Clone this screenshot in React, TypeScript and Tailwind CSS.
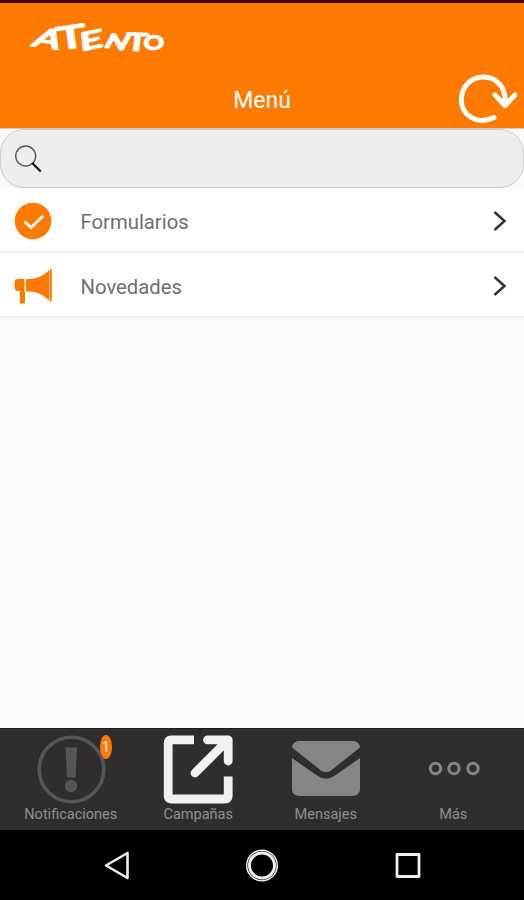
import type { ReactNode } from "react";

type MenuRowProps = {
  label: string;
  icon: ReactNode;
};

type TabProps = {
  label: string;
  icon: ReactNode;
  badge?: number;
};

function Logo() {
  return (
    <svg className="ml-[28px] mt-[14px] block h-10 w-[140px] overflow-visible" viewBox="0 0 140 40">
      <g
        fill="#fff"
        stroke="#fff"
        strokeWidth="1.9"
        strokeLinejoin="round"
        fontFamily="Lato, sans-serif"
      >
        <text transform="translate(3 28.5) rotate(8) skewX(-18) scale(1.5 1)" fontSize="26">A</text>
        <text transform="translate(30 33) rotate(-8) scale(1.6 1)" fontSize="31">T</text>
        <text transform="translate(53 34) rotate(-12) skewX(-6) scale(1.65 1)" fontSize="24">E</text>
        <text transform="translate(75 30) rotate(8) skewX(-20) scale(1.45 1)" fontSize="20">N</text>
        <text transform="translate(97.5 33) rotate(2) skewX(-4) scale(1.5 1)" fontSize="24">T</text>
        <text transform="translate(116.5 33) rotate(-5) scale(1.35 1)" fontSize="18.5">O</text>
      </g>
    </svg>
  );
}

function RefreshIcon() {
  return (
    <svg className="block h-[52px] w-[60px]" viewBox="0 0 60 52" fill="none" stroke="#fff" strokeWidth="5" strokeLinecap="round" strokeLinejoin="round">
      <path d="M37 43.5C21 51.5 4.3 41.5 4.3 26C4.3 12.5 14 3 26.5 3C40.5 3 50 14.5 48 31.5" />
      <path d="M38 21L48 31.5L58 21" />
    </svg>
  );
}

function SearchIcon() {
  return (
    <svg className="block size-7" viewBox="0 0 28 28" fill="none">
      <circle cx="11.7" cy="11" r="10" stroke="#555" strokeWidth="1.4" />
      <path d="M18.2 18L26.7 26.5" stroke="#111" strokeWidth="2.2" />
    </svg>
  );
}

function CheckIcon() {
  return (
    <svg className="block size-[38px]" viewBox="0 0 38 38" fill="none">
      <circle cx="19" cy="19" r="18.3" fill="#ff7a00" />
      <path d="M10.5 19.5L17 25.5L29 14" stroke="#fff" strokeWidth="2.8" />
    </svg>
  );
}

function MegaphoneIcon() {
  return (
    <svg className="block size-[38px]" viewBox="0 0 38 38" fill="#ff7a00">
      <path d="M10.5 12H4Q.5 12 .5 15.5V20Q.5 24 4 24H6V36.5H11V24H10.5Z" />
      <path d="M12 12C21 12.5 29 10 35.5 2.5V34C29 27 21 24 12 24.5Z" />
      <path d="M36 2H37.8V34.5H36Z" />
    </svg>
  );
}

function AlertIcon() {
  return (
    <svg className="block size-[70px]" viewBox="0 0 70 70" fill="#575556">
      <circle cx="35.5" cy="34.5" r="32.3" fill="none" stroke="#575556" strokeWidth="3.6" />
      <path d="M29.5 12.5H41L39.5 42.5H31Z" />
      <circle cx="35" cy="51" r="6.2" />
    </svg>
  );
}

function ShareIcon() {
  return (
    <svg className="block size-[70px]" viewBox="0 0 70 70" fill="none" stroke="#f1f1f1" strokeWidth="8.8" strokeLinejoin="round">
      <path d="M31 4.8H8Q5.2 4.8 5.2 8V61Q5.2 64 8 64H62Q65.2 64 65.2 61V41.5" />
      <path d="M44.5 4.8H65.2V26M64.5 5.5L32 38" strokeLinecap="round" />
    </svg>
  );
}

function MailIcon() {
  return (
    <svg className="block size-[70px]" viewBox="0 0 70 70" fill="#858585">
      <path d="M1 12.5Q2 6 8 6H62Q68 6 69 12.5L40 35.5Q35 38.5 30 35.5Z" />
      <path d="M1 23L26 40.5Q35 47 44 40.5L69 23V54Q69 61 61 61H9Q1 61 1 54Z" />
    </svg>
  );
}

function MoreIcon() {
  return (
    <svg className="block size-[70px]" viewBox="0 0 70 70" fill="none" stroke="#858585" strokeWidth="3">
      <circle cx="17.5" cy="33.5" r="5.2" />
      <circle cx="36" cy="33.5" r="5.2" />
      <circle cx="55" cy="33.5" r="5.2" />
    </svg>
  );
}

function MenuRow({ label, icon }: MenuRowProps) {
  return (
    <li className="flex h-[65px] items-center border-b-2 border-[#eeeeee] bg-white pl-[14px] pr-4 pt-[2px]">
      {icon}
      <span className="ml-[28.5px] mt-[2px] flex-1 text-[20.3px] leading-6 text-[#6f6f6f]">{label}</span>
      <svg className="block h-6 w-4" viewBox="0 0 16 24" fill="none" stroke="#333" strokeWidth="2.5">
        <path d="M2.5 3L12.5 12L2.5 21" />
      </svg>
    </li>
  );
}

function Tab({ label, icon, badge }: TabProps) {
  return (
    <button className="relative flex w-[127.5px] flex-col items-center pt-[6px]">
      {icon}
      <span className="mt-[1px] text-[14.5px] leading-[18px] text-[#908e8f]">{label}</span>
      {badge && (
        <span className="absolute left-[93px] top-[6px] flex h-6 w-[12px] items-center justify-center rounded-[50%] bg-[#ff7a00] text-[14px] text-white">
          {badge}
        </span>
      )}
    </button>
  );
}

export default function App() {
  return (
    <div className="flex h-[900px] w-[524px] flex-col overflow-hidden bg-[#fafafa] font-[Roboto,sans-serif]">
      <header className="h-[128px] shrink-0 border-t-[3px] border-[#400006] bg-[#ff7a00]">
        <Logo />
        <div className="grid h-[71px] grid-cols-[1fr_auto_1fr] items-center">
          <h1 className="col-start-2 mt-[17px] text-[23px] leading-7 text-white">Menú</h1>
          <button className="mr-[7px] mt-[14px] justify-self-end">
            <RefreshIcon />
          </button>
        </div>
      </header>

      <div className="h-[60px] shrink-0 border-t border-[#cfc8c3] bg-[#fafafa]">
        <label className="flex h-[59px] items-center rounded-[24px] border border-[#cccccc] bg-[#eeeeee] pl-[13px]">
          <SearchIcon />
          <input className="ml-3 flex-1 bg-transparent text-xl outline-none" />
        </label>
      </div>

      <ul className="flex-1">
        <MenuRow label="Formularios" icon={<CheckIcon />} />
        <MenuRow label="Novedades" icon={<MegaphoneIcon />} />
      </ul>

      <nav className="flex h-[102px] shrink-0 border-t border-[#1d1a1b] bg-[#312d2e] pl-[7px]">
        <Tab label="Notificaciones" icon={<AlertIcon />} badge={1} />
        <Tab label="Campañas" icon={<ShareIcon />} />
        <Tab label="Mensajes" icon={<MailIcon />} />
        <Tab label="Más" icon={<MoreIcon />} />
      </nav>

      <footer className="flex h-[70px] shrink-0 items-center justify-center gap-[112px] bg-black pt-px">
        <svg className="block size-[34px]" viewBox="0 0 34 34" fill="none" stroke="#eee" strokeWidth="2.6" strokeLinejoin="round">
          <path d="M7 16.5L28.5 4V29Z" />
        </svg>
        <svg className="block size-[34px]" viewBox="0 0 34 34" fill="none" stroke="#eee">
          <circle cx="17" cy="16.5" r="15.3" strokeWidth="1.5" />
          <circle cx="17" cy="16.5" r="12.5" strokeWidth="3" />
        </svg>
        <svg className="block size-[34px]" viewBox="0 0 34 34" fill="none" stroke="#eee" strokeWidth="2.8" strokeLinejoin="round">
          <path d="M6 5.5H28V27.5H6Z" />
        </svg>
      </footer>
    </div>
  );
}
